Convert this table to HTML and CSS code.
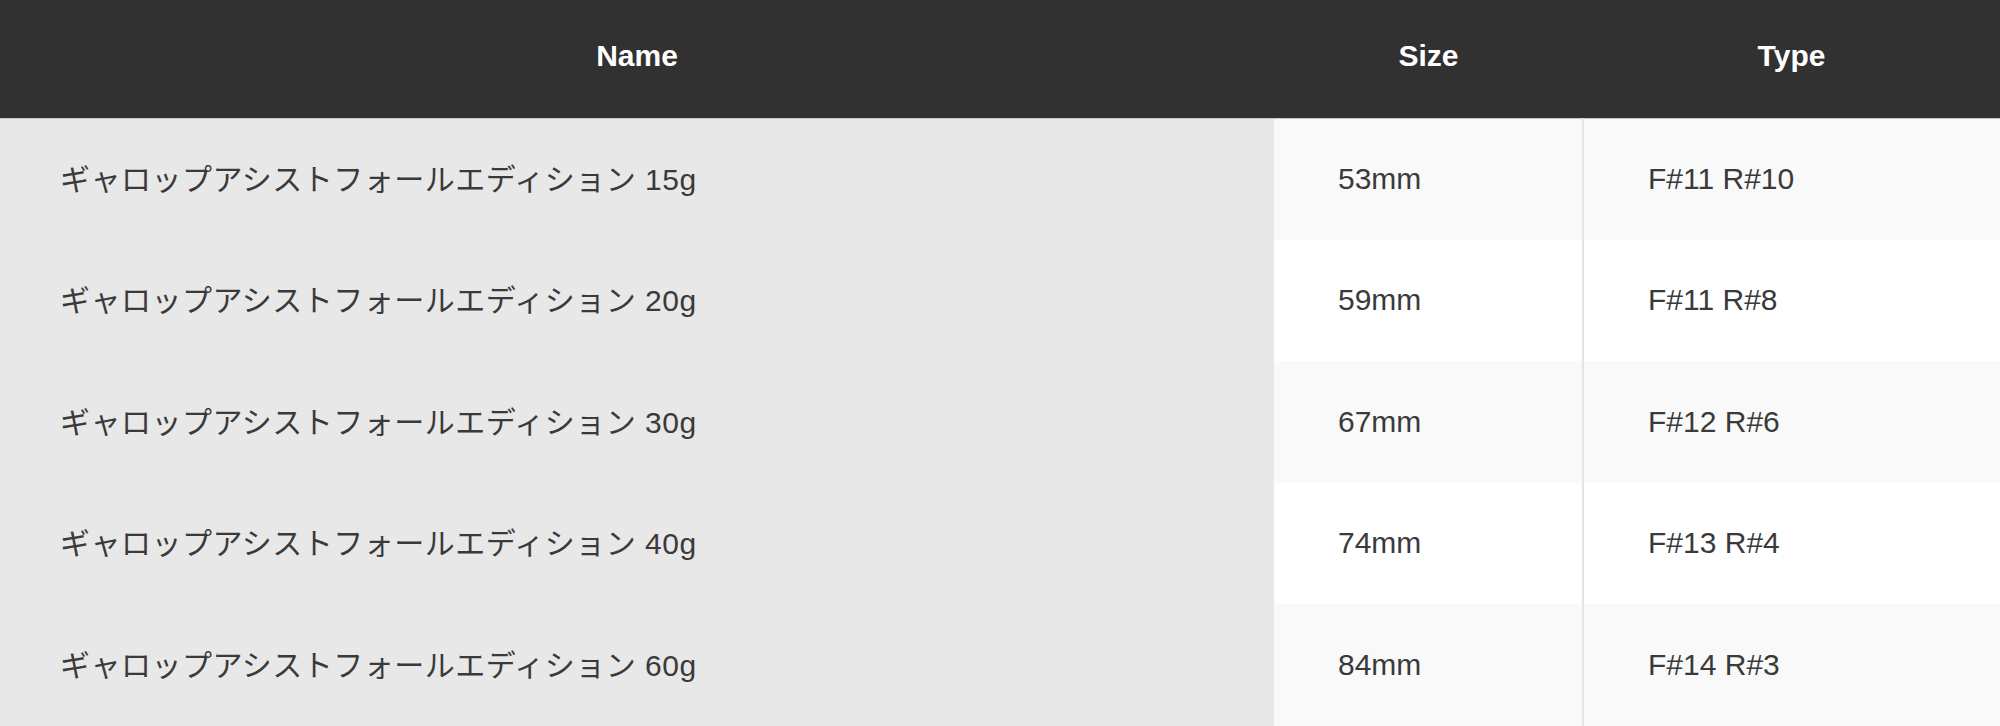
FILE: index.html
```html
<!DOCTYPE html>
<html lang="ja">
<head>
<meta charset="utf-8">
<title>Spec table</title>
<link rel="stylesheet" href="styles.css">
</head>
<body>
<table class="spec">
  <colgroup>
    <col class="col-name">
    <col class="col-size">
    <col class="col-type">
  </colgroup>
  <thead>
    <tr>
      <th>Name</th>
      <th>Size</th>
      <th>Type</th>
    </tr>
  </thead>
  <tbody>
    <tr><td class="name">ギャロップアシストフォールエディション 15g</td><td class="size">53mm</td><td class="type">F#11 R#10</td></tr>
    <tr><td class="name">ギャロップアシストフォールエディション 20g</td><td class="size">59mm</td><td class="type">F#11 R#8</td></tr>
    <tr><td class="name">ギャロップアシストフォールエディション 30g</td><td class="size">67mm</td><td class="type">F#12 R#6</td></tr>
    <tr><td class="name">ギャロップアシストフォールエディション 40g</td><td class="size">74mm</td><td class="type">F#13 R#4</td></tr>
    <tr><td class="name">ギャロップアシストフォールエディション 60g</td><td class="size">84mm</td><td class="type">F#14 R#3</td></tr>
  </tbody>
</table>
</body>
</html>
```

FILE: styles.css
```css
html, body {
  margin: 0;
  padding: 0;
  background: #ffffff;
}

body {
  font-family: "Liberation Sans", Arial, "Noto Sans CJK JP", sans-serif;
  color: #3a3a3a;
  overflow: hidden;
}

.spec {
  width: 2000px;
  border-collapse: collapse;
  table-layout: fixed;
}

.col-name { width: 1274px; }
.col-size { width: 309px; }
.col-type { width: 417px; }

.spec th {
  height: 118px;
  padding: 0 0 5px 0;
  box-sizing: border-box;
  background: #313131;
  color: #ffffff;
  font-weight: bold;
  font-size: 30px;
  text-align: center;
  vertical-align: middle;
  border-bottom: 1px solid #c9c9c9;
}

.spec td {
  height: 121.5px;
  padding: 0 0 0 64px;
  font-size: 30px;
  vertical-align: middle;
  white-space: nowrap;
  box-sizing: border-box;
}

.spec td.name {
  padding: 0 0 4px 60px;
  letter-spacing: 0.5px;
  background: #e8e8e8;
}

.spec td.size {
  border-right: 2px solid #e4e4e4;
}

.spec tbody tr:nth-child(odd) td.size,
.spec tbody tr:nth-child(odd) td.type {
  background: #f9f9f9;
}

.spec tbody tr:nth-child(even) td.size,
.spec tbody tr:nth-child(even) td.type {
  background: #ffffff;
}
```
